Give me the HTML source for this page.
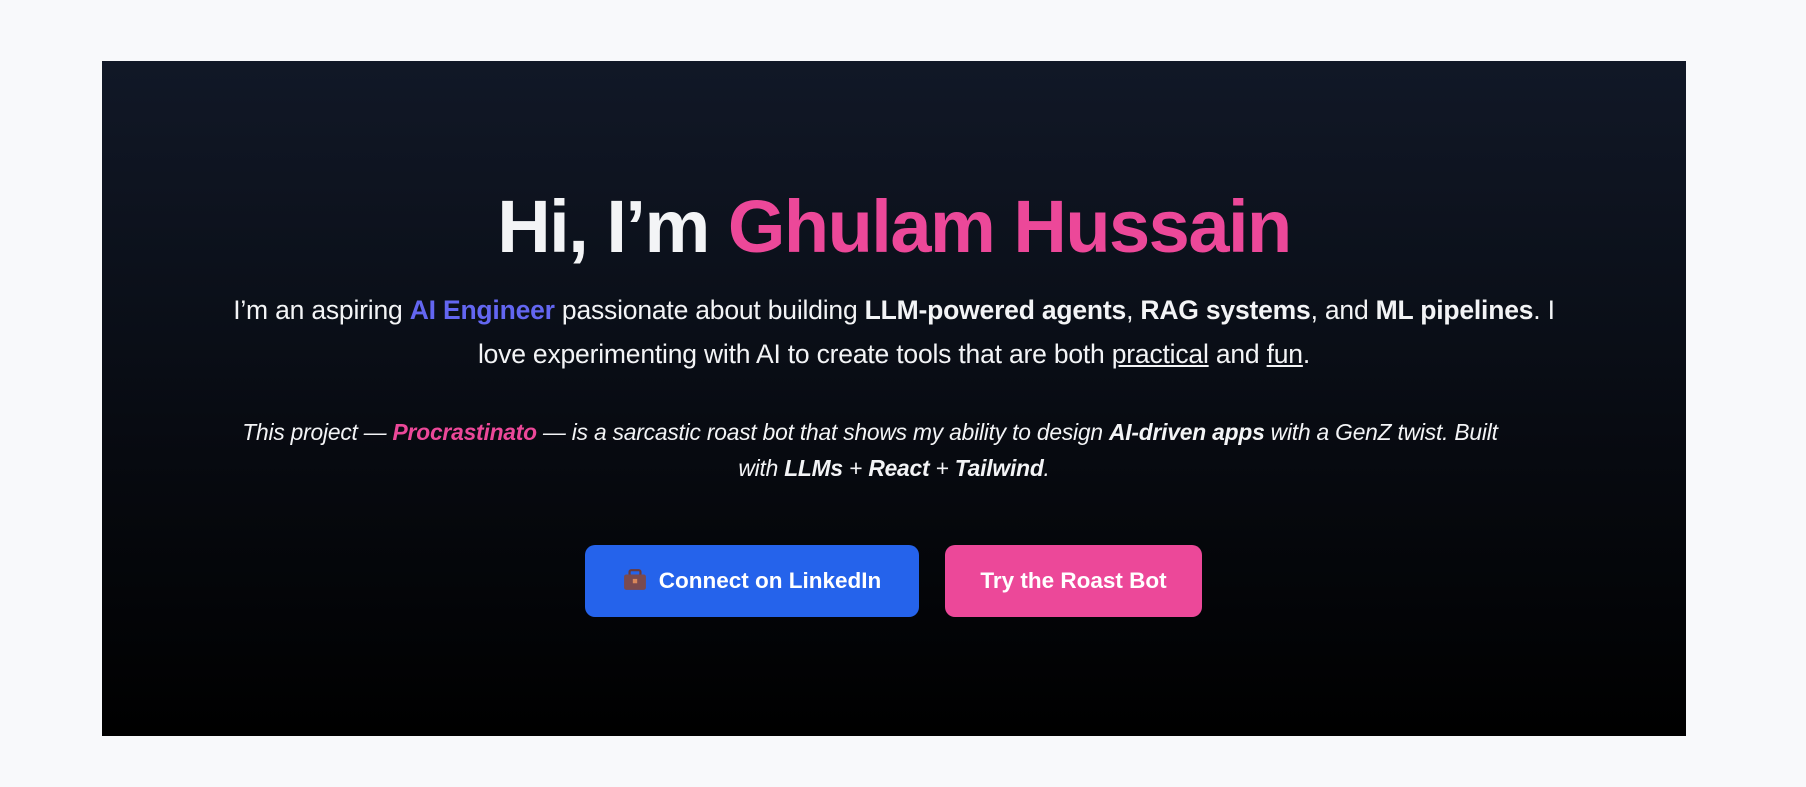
<!DOCTYPE html>
<html><head><meta charset="utf-8"><style>
html,body{margin:0;padding:0;width:1806px;height:787px;background:#f8f9fb;overflow:hidden;font-family:"Liberation Sans",sans-serif}
.card{position:absolute;left:102px;top:61px;width:1584px;height:675px;background:linear-gradient(#111827,#000);color:#f3f4f6;text-align:center}
h1{position:absolute;left:0;right:0;top:126px;margin:0;font-size:74px;line-height:80px;font-weight:bold;letter-spacing:-1.5px}
h1 span{color:#ec4899}
.p1{position:absolute;left:0;right:0;top:227px;font-size:26.5px;line-height:44px;white-space:nowrap;letter-spacing:-0.2px}
.p1 b{font-weight:bold}
.ai{color:#6366f1;font-weight:bold}
u{text-decoration:underline}
.p2{position:absolute;left:0;right:0;top:353px;font-size:22.8px;line-height:36px;font-style:italic;white-space:nowrap;letter-spacing:-0.2px}
.p2 .pr{color:#ec4899;font-weight:bold}
.btn{position:absolute;top:484px;height:72px;border-radius:10px;color:#fff;font-size:22.5px;font-weight:bold;line-height:72px;text-align:center}
.b1{left:483px;width:334px;background:#2563eb}
.b2{left:843px;width:257px;background:#ec4899}
</style></head><body>
<div class="card">
<h1>Hi, I’m <span>Ghulam Hussain</span></h1>
<div class="p1">I’m an aspiring <span class="ai">AI Engineer</span> passionate about building <b>LLM-powered agents</b>, <b>RAG systems</b>, and <b>ML pipelines</b>. I<br>love experimenting with AI to create tools that are both <u>practical</u> and <u>fun</u>.</div>
<div class="p2">This project — <span class="pr">Procrastinato</span> — is a sarcastic roast bot that shows my ability to design <b>AI-driven apps</b> with a GenZ twist. Built<span style="display:inline-block;width:48px"></span><br>with <b>LLMs</b> + <b>React</b> + <b>Tailwind</b>.</div>
<div class="btn b1"><svg width="24" height="22" viewBox="0 0 22 20" style="vertical-align:-3px;margin-right:12px"><rect x="6" y="1" width="10" height="5" rx="1.5" fill="none" stroke="#6b3a3a" stroke-width="2"/><rect x="1" y="5" width="20" height="14" rx="2" fill="#7a4a4f"/><rect x="9" y="9" width="4" height="4" fill="#d9875a"/></svg>Connect on LinkedIn</div>
<div class="btn b2">Try the Roast Bot</div>
</div>
</body></html>
